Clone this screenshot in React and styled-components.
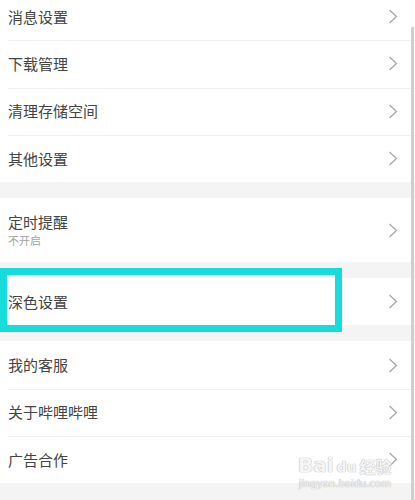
import React from 'react'
import styled, { createGlobalStyle } from 'styled-components'

const Global = createGlobalStyle`
  html, body { margin: 0; padding: 0; background: #f4f4f4; }
  body { font-family: "Noto Sans CJK SC", "Noto Sans", sans-serif; overflow: hidden; }
`

const Screen = styled.div`
  position: relative;
  width: 415px;
  height: 500px;
  overflow: hidden;
  background: #f4f4f4;
`

const Scroller = styled.div`
  margin-top: -7px;
  display: flex;
  flex-direction: column;
  gap: 16px;
`

const Group = styled.div`
  background: #fff;
  display: flex;
  flex-direction: column;
`

const Row = styled.div`
  height: ${p => (p.tall ? '64px' : '47.3px')};
  box-sizing: border-box;
  padding-left: 8px;
  display: flex;
  align-items: center;
  justify-content: space-between;
  position: relative;
  & + &::before {
    content: '';
    position: absolute;
    top: 0;
    left: 8px;
    right: 0;
    border-top: 1px solid #f0f0f0;
  }
`

const Texts = styled.div`
  display: flex;
  flex-direction: column;
`

const Title = styled.span`
  font-size: 15px;
  line-height: 20px;
  color: #444;
`

const Sub = styled.span`
  font-size: 11px;
  line-height: 16px;
  color: #a3a3a3;
`

const Chevron = styled.svg`
  width: 10px;
  height: 15px;
  margin-right: 17px;
  flex-shrink: 0;
`

const ScrollBar = styled.div`
  position: absolute;
  right: 1px;
  top: 27px;
  bottom: 0;
  width: 3px;
  background: #cfcfcf;
`

const Highlight = styled.div`
  position: absolute;
  left: 0;
  top: 268px;
  width: 342px;
  height: 64px;
  box-sizing: border-box;
  border: 7px solid #17dcdc;
`

const Watermark = styled.div`
  position: absolute;
  left: 298px;
  top: 452px;
  display: flex;
  flex-direction: column;
  align-items: center;
  color: rgba(255, 255, 255, 0.9);
  font-family: "DejaVu Sans", sans-serif;
  text-shadow: 0 0 1px #b0b0b0, 0 0 1px #b0b0b0;
  pointer-events: none;
`

const MarkTop = styled.div`
  display: flex;
  align-items: flex-end;
  gap: 3px;
  font-size: 20px;
  font-weight: bold;
  line-height: 26px;
`

const MarkDu = styled.span`
  font-size: 14px;
  line-height: 22px;
`

const MarkCjk = styled.span`
  font-family: "Noto Sans CJK SC", sans-serif;
  font-size: 16px;
  line-height: 24px;
`

const MarkUrl = styled.span`
  font-size: 10px;
  line-height: 12px;
`

const Arrow = () => (
  <Chevron viewBox="0 0 10 15">
    <path d="M1.5 1 L8.5 7.5 L1.5 14" fill="none" stroke="#a8a8a8" strokeWidth="1.3" />
  </Chevron>
)

const Item = ({ title, sub }) => (
  <Row tall={!!sub}>
    <Texts>
      <Title>{title}</Title>
      {sub && <Sub>{sub}</Sub>}
    </Texts>
    <Arrow />
  </Row>
)

const groups = [
  [{ title: '消息设置' }, { title: '下载管理' }, { title: '清理存储空间' }, { title: '其他设置' }],
  [{ title: '定时提醒', sub: '不开启' }],
  [{ title: '深色设置' }],
  [{ title: '我的客服' }, { title: '关于哔哩哔哩' }, { title: '广告合作' }],
]

export default function App() {
  return (
    <Screen>
      <Global />
      <Scroller>
        {groups.map((g, i) => (
          <Group key={i}>
            {g.map(it => <Item key={it.title} {...it} />)}
          </Group>
        ))}
      </Scroller>
      <ScrollBar />
      <Highlight />
      <Watermark>
        <MarkTop>
          <span>Bai</span>
          <MarkDu>du</MarkDu>
          <MarkCjk>经验</MarkCjk>
        </MarkTop>
        <MarkUrl>jingyan.baidu.com</MarkUrl>
      </Watermark>
    </Screen>
  )
}
